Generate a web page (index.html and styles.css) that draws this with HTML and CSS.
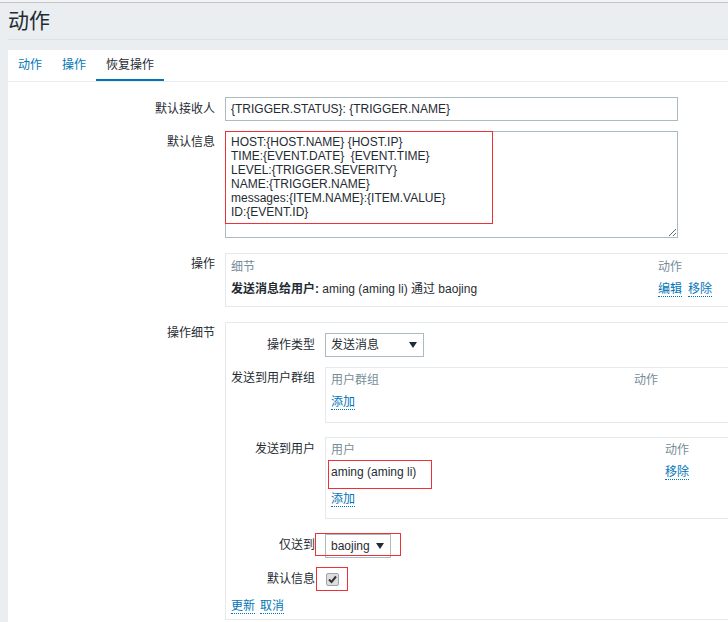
FILE: index.html
```html
<!DOCTYPE html>
<html lang="zh-CN">
<head>
<meta charset="utf-8">
<title>动作</title>
<link rel="stylesheet" href="styles.css">
</head>
<body>
<div class="topbar"></div>
<header class="page-header"><h1>动作</h1></header>
<div class="panel">
  <ul class="tabs">
    <li>动作</li>
    <li>操作</li>
    <li class="active">恢复操作</li>
  </ul>
  <div class="form">
    <div class="row row-subject">
      <div class="lbl lbl-input">默认接收人</div>
      <div class="field"><input class="text" type="text" value="{TRIGGER.STATUS}: {TRIGGER.NAME}" readonly></div>
    </div>
    <div class="row">
      <div class="lbl">默认信息</div>
      <div class="field">
        <textarea class="msg" readonly>HOST:{HOST.NAME} {HOST.IP}
TIME:{EVENT.DATE}  {EVENT.TIME}
LEVEL:{TRIGGER.SEVERITY}
NAME:{TRIGGER.NAME}
messages:{ITEM.NAME}:{ITEM.VALUE}
ID:{EVENT.ID}</textarea>
        <div class="mark mark-msg"></div>
      </div>
    </div>
    <div class="row">
      <div class="lbl">操作</div>
      <div class="field">
        <div class="box ops">
          <div class="trow thead"><div class="c-ops">细节</div><div>动作</div></div>
          <div class="trow tbody"><div class="c-ops"><b>发送消息给用户:</b> aming (aming li) 通过 baojing</div><div><span class="lnk gap6">编辑</span><span class="lnk">移除</span></div></div>
        </div>
      </div>
    </div>
    <div class="row row-last">
      <div class="lbl">操作细节</div>
      <div class="field">
        <div class="box detail">
          <div class="irow irow-type">
            <div class="ilbl pt5">操作类型</div>
            <div class="ifield"><div class="sel sel-type"><span>发送消息</span><span class="arrow"></span></div></div>
          </div>
          <div class="irow irow-group">
            <div class="ilbl">发送到用户群组</div>
            <div class="ifield">
              <div class="box sub">
                <div class="trow thead"><div class="c-group">用户群组</div><div>动作</div></div>
                <div class="trow add-group"><span class="lnk">添加</span></div>
              </div>
            </div>
          </div>
          <div class="irow irow-users">
            <div class="ilbl pt5">发送到用户</div>
            <div class="ifield">
              <div class="box sub">
                <div class="trow thead"><div class="c-users">用户</div><div>动作</div></div>
                <div class="trow tbody"><div class="c-users">aming (aming li)</div><div><span class="lnk">移除</span></div><div class="mark mark-user"></div></div>
                <div class="trow add-users"><span class="lnk">添加</span></div>
              </div>
            </div>
          </div>
          <div class="irow irow-only">
            <div class="ilbl">仅送到</div>
            <div class="ifield"><div class="sel sel-media"><span>baojing</span><span class="arrow"></span></div><div class="mark mark-media"></div></div>
          </div>
          <div class="irow irow-check">
            <div class="ilbl pt5">默认信息</div>
            <div class="ifield">
              <span class="check"><svg width="11" height="11" viewBox="0 0 11 11"><path d="M2 5.5 L4.5 8 L9 2.5" fill="none" stroke="#333" stroke-width="2"/></svg></span>
              <div class="mark mark-check"></div>
            </div>
          </div>
          <div class="buttons"><span class="lnk gap5">更新</span><span class="lnk">取消</span></div>
        </div>
      </div>
    </div>
  </div>
</div>
</body>
</html>
```
FILE: styles.css
```css
html, body {
  margin: 0;
  overflow: hidden;
}
body {
  background: #ebeef0;
  font: 12px/14px "Liberation Sans", "Noto Sans CJK SC", sans-serif;
  color: #1f2c33;
}
.topbar {
  height: 2px;
  background: #f3f4f5;
  border-bottom: 1px solid #c4c6c8;
}
.page-header {
  margin: 0 0 10px 8px;
  padding: 6px 0;
  border-bottom: 1px solid #dde1e5;
}
.page-header h1 {
  margin: 0;
  font-size: 21px;
  line-height: 24px;
  font-weight: normal;
}
.panel {
  margin-left: 8px;
  width: 720px;
  background: #fff;
  padding-bottom: 5px;
}
.tabs {
  list-style: none;
  margin: 0;
  padding: 0;
  display: flex;
  border-bottom: 1px solid #ebeef0;
}
.tabs li {
  padding: 2px 10px 0;
  line-height: 27px;
  border-bottom: 2px solid transparent;
  color: #0275b8;
}
.tabs li.active {
  border-bottom-color: #0275b8;
  color: #1f2c33;
}
.form {
  padding-top: 15px;
}
.row {
  display: flex;
  gap: 10px;
  margin-bottom: 15px;
}
.row-subject {
  margin-bottom: 10px;
}
.row-last {
  margin-bottom: 0;
}
.lbl {
  width: 207px;
  flex: none;
  text-align: right;
  padding-top: 4px;
}
.lbl-input {
  padding-top: 5px;
}
.field {
  flex: 1;
  min-width: 0;
  position: relative;
}
input.text {
  display: block;
  width: 453px;
  height: 24px;
  box-sizing: border-box;
  margin: 0;
  border: 1px solid #acbbc2;
  padding: 0 5px;
  font: inherit;
  color: #1f2c33;
  outline: none;
}
textarea.msg {
  display: block;
  width: 453px;
  height: 107px;
  box-sizing: border-box;
  margin: 0;
  border: 1px solid #acbbc2;
  padding: 3px 5px;
  font: inherit;
  line-height: 14px;
  color: #1f2c33;
  resize: both;
  outline: none;
  overflow: hidden;
}
.mark {
  position: absolute;
  box-sizing: border-box;
  border: 1px solid #ec3237;
  pointer-events: none;
}
.mark-msg {
  left: 0;
  top: 0;
  width: 268px;
  height: 93px;
}
.box {
  border: 1px solid #e6e9ec;
  border-right: 0;
}
.ops {
  padding: 0 5px 6px;
}
.trow {
  display: flex;
  position: relative;
}
.thead {
  color: #768d99;
  padding: 6px 0 4px;
}
.tbody {
  padding: 4px 0;
}
.c-ops {
  width: 427px;
  flex: none;
}
.lnk {
  color: #0275b8;
  border-bottom: 1px dotted #0275b8;
}
.gap6 {
  margin-right: 6px;
}
.gap5 {
  margin-right: 5px;
}
.detail {
  padding: 10px 0 5px 5px;
}
.irow {
  display: flex;
  gap: 10px;
  margin-bottom: 10px;
}
.ilbl {
  width: 84px;
  flex: none;
  text-align: right;
  padding-top: 4px;
}
.ilbl.pt5 {
  padding-top: 5px;
}
.ifield {
  flex: 1;
  min-width: 0;
  position: relative;
}
.sel {
  display: flex;
  align-items: center;
  justify-content: space-between;
  height: 24px;
  box-sizing: border-box;
  border: 1px solid #acbbc2;
  padding: 0 6px 0 5px;
  background: #fff;
}
.sel-type {
  width: 99px;
}
.sel-media {
  width: 66px;
}
.arrow {
  width: 0;
  height: 0;
  border-left: 4px solid transparent;
  border-right: 4px solid transparent;
  border-top: 6px solid #1f2c33;
}
.sub {
  padding: 0 5px;
}
.sub .thead {
  padding: 5px 0 3px;
}
.sub .tbody {
  padding: 5px 0 3px;
}
.c-group {
  width: 303px;
  flex: none;
}
.c-users {
  width: 334px;
  flex: none;
}
.add-group {
  padding: 5px 0 12px;
}
.add-users {
  padding: 10px 0 11px;
}
.irow-group {
  margin-bottom: 14px;
}
.irow-users {
  margin-bottom: 15px;
}
.irow-only {
  margin-bottom: 9px;
}
.irow-check {
  height: 24px;
  margin-bottom: 8px;
}
.mark-user {
  left: -3px;
  top: 0;
  width: 104px;
  height: 29px;
}
.mark-media {
  left: -10px;
  top: -1px;
  width: 86px;
  height: 23px;
}
.check {
  display: block;
  margin-top: 6px;
  margin-left: 1px;
  width: 13px;
  height: 13px;
  box-sizing: border-box;
  border: 1px solid #a3a3a3;
  border-radius: 2px;
  background: #dedede;
}
.check svg {
  display: block;
}
.mark-check {
  left: -9px;
  top: 0;
  width: 32px;
  height: 24px;
}
.buttons {
  display: flex;
}
```
